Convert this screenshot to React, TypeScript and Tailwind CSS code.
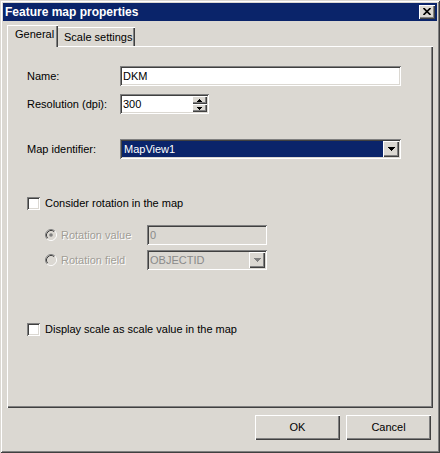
import React from "react";

// Classic 3D bevels (Windows 2000 style)
const sunken =
  "shadow-[inset_1px_1px_#808080,inset_-1px_-1px_#ffffff,inset_2px_2px_#404040,inset_-2px_-2px_#dbd8d2]";
const raised =
  "shadow-[inset_1px_1px_#ffffff,inset_-1px_-1px_#404040,inset_-2px_-2px_#808080]";

function DownArrow({ color = "#000000" }: { color?: string }) {
  return (
    <svg width="7" height="4" viewBox="0 0 7 4" shapeRendering="crispEdges">
      <rect x="0" y="0" width="7" height="1" fill={color} />
      <rect x="1" y="1" width="5" height="1" fill={color} />
      <rect x="2" y="2" width="3" height="1" fill={color} />
      <rect x="3" y="3" width="1" height="1" fill={color} />
    </svg>
  );
}

function SpinArrow({ up }: { up?: boolean }) {
  return (
    <svg
      width="5"
      height="3"
      viewBox="0 0 5 3"
      shapeRendering="crispEdges"
      style={up ? { transform: "scaleY(-1)" } : undefined}
    >
      <rect x="0" y="0" width="5" height="1" fill="#000" />
      <rect x="1" y="1" width="3" height="1" fill="#000" />
      <rect x="2" y="2" width="1" height="1" fill="#000" />
    </svg>
  );
}

function Checkbox() {
  return <div className={`h-[13px] w-[13px] shrink-0 bg-white ${sunken}`} />;
}

function Radio({ checked }: { checked?: boolean }) {
  return (
    <svg width="12" height="12" viewBox="0 0 12 12" className="shrink-0">
      <circle cx="6" cy="6" r="4.2" fill="#dbd8d2" />
      <path d="M2.11 9.89 A5.5 5.5 0 0 1 9.89 2.11" fill="none" stroke="#808080" strokeWidth="1" />
      <path d="M9.89 2.11 A5.5 5.5 0 0 1 2.11 9.89" fill="none" stroke="#ffffff" strokeWidth="1" />
      <path d="M2.82 9.18 A4.5 4.5 0 0 1 9.18 2.82" fill="none" stroke="#404040" strokeWidth="1" />
      <path d="M9.18 2.82 A4.5 4.5 0 0 1 2.82 9.18" fill="none" stroke="#dbd8d2" strokeWidth="1" />
      {checked && <circle cx="6" cy="6" r="1.8" fill="#808080" />}
    </svg>
  );
}

function Button({ children }: { children: React.ReactNode }) {
  return (
    <div
      className={`flex h-[25px] w-[85px] items-center justify-center bg-[#dbd8d2] text-[11px] text-black ${raised}`}
    >
      {children}
    </div>
  );
}

export default function App() {
  return (
    <div className="h-[453px] w-[440px] bg-white font-['Liberation_Sans',Arial,sans-serif] text-[11px] leading-[13px] text-black">
      <div className="flex h-[453px] w-[440px] flex-col bg-[#dbd8d2] p-[3px] shadow-[inset_1px_1px_#dbd8d2,inset_-1px_-1px_#404040,inset_2px_2px_#ffffff,inset_-2px_-2px_#808080]">
        {/* Title bar */}
        <div className="flex h-[18px] shrink-0 items-center bg-[#0a246a] pl-[2px]">
          <span className="text-[12px] font-bold leading-[14px] text-white">Feature map properties</span>
          <div
            className={`ml-auto mr-[2px] flex h-[14px] w-[16px] items-center justify-center bg-[#dbd8d2] ${raised}`}
          >
            <svg width="8" height="7" viewBox="0 0 8 7" className="-mt-px">
              <path d="M0.5 0 L7.5 7 M7.5 0 L0.5 7" stroke="#000" strokeWidth="1.6" />
            </svg>
          </div>
        </div>

        <div className="flex flex-1 flex-col px-[4px] pt-[4px]">
          {/* Tabs */}
          <div className="flex h-[21px] shrink-0 items-end">
            <div className="relative z-10 -mb-px h-[22px] w-[51px] bg-[#dbd8d2] pl-[8px] pt-[3px] shadow-[inset_1px_1px_#ffffff,inset_-1px_0_#404040,inset_-2px_0_#808080]">
              General
            </div>
            <div className="h-[19px] w-[77px] bg-[#dbd8d2] pl-[6px] pt-[4px] shadow-[inset_0_1px_#ffffff,inset_-1px_0_#404040,inset_-2px_0_#808080]">
              Scale settings
            </div>
          </div>

          {/* Tab page */}
          <div className="flex h-[362px] shrink-0 flex-col bg-[#dbd8d2] pl-[20px] pt-[20px] shadow-[inset_1px_1px_#ffffff,inset_-1px_-1px_#404040,inset_-2px_-2px_#808080]">
            <div className="flex h-[20px] items-center">
              <div className="w-[93px]">Name:</div>
              <div className={`flex h-[20px] w-[281px] items-center bg-white pl-[3px] ${sunken}`}>DKM</div>
            </div>

            <div className="mt-[8px] flex h-[20px] items-center">
              <div className="w-[93px]">Resolution (dpi):</div>
              <div className={`flex h-[20px] w-[89px] bg-white p-[2px] ${sunken}`}>
                <div className="flex flex-1 items-center pl-[1px]">300</div>
                <div className="flex w-[15px] flex-col">
                  <div className={`flex h-[8px] items-center justify-center bg-[#dbd8d2] ${raised}`}>
                    <SpinArrow up />
                  </div>
                  <div className={`flex h-[8px] items-center justify-center bg-[#dbd8d2] ${raised}`}>
                    <SpinArrow />
                  </div>
                </div>
              </div>
            </div>

            <div className="mt-[25px] flex h-[20px] items-center">
              <div className="w-[93px]">Map identifier:</div>
              <div className={`flex h-[20px] w-[281px] bg-white p-[2px] ${sunken}`}>
                <div className="flex flex-1 items-center bg-[#0a246a] pl-[2px] text-white">MapView1</div>
                <div className={`flex w-[16px] items-center justify-center bg-[#dbd8d2] ${raised}`}>
                  <DownArrow />
                </div>
              </div>
            </div>

            <div className="mt-[38px] flex h-[13px] items-center gap-[5px]">
              <Checkbox />
              <span>Consider rotation in the map</span>
            </div>

            <div className="mt-[15px] flex h-[20px] items-center pl-[18px]">
              <Radio checked />
              <div className="ml-[4px] w-[86px] text-[#a09d96] [text-shadow:1px_1px_0_#ffffff]">Rotation value</div>
              <div className={`flex h-[20px] w-[120px] items-center bg-[#dbd8d2] pl-[3px] text-[#8a8a8a] ${sunken}`}>
                0
              </div>
            </div>

            <div className="mt-[5px] flex h-[20px] items-center pl-[18px]">
              <Radio />
              <div className="ml-[4px] w-[86px] text-[#a09d96] [text-shadow:1px_1px_0_#ffffff]">Rotation field</div>
              <div className={`flex h-[20px] w-[120px] bg-[#dbd8d2] p-[2px] ${sunken}`}>
                <div className="flex flex-1 items-center pl-[1px] text-[#8a8a8a]">OBJECTID</div>
                <div className={`flex w-[16px] items-center justify-center bg-[#dbd8d2] ${raised}`}>
                  <DownArrow color="#808080" />
                </div>
              </div>
            </div>

            <div className="mt-[53px] flex h-[13px] items-center gap-[5px]">
              <Checkbox />
              <span>Display scale as scale value in the map</span>
            </div>
          </div>

          {/* Dialog buttons */}
          <div className="mt-[7px] flex justify-end gap-[6px] pr-[2px]">
            <Button>OK</Button>
            <Button>Cancel</Button>
          </div>
        </div>
      </div>
    </div>
  );
}
